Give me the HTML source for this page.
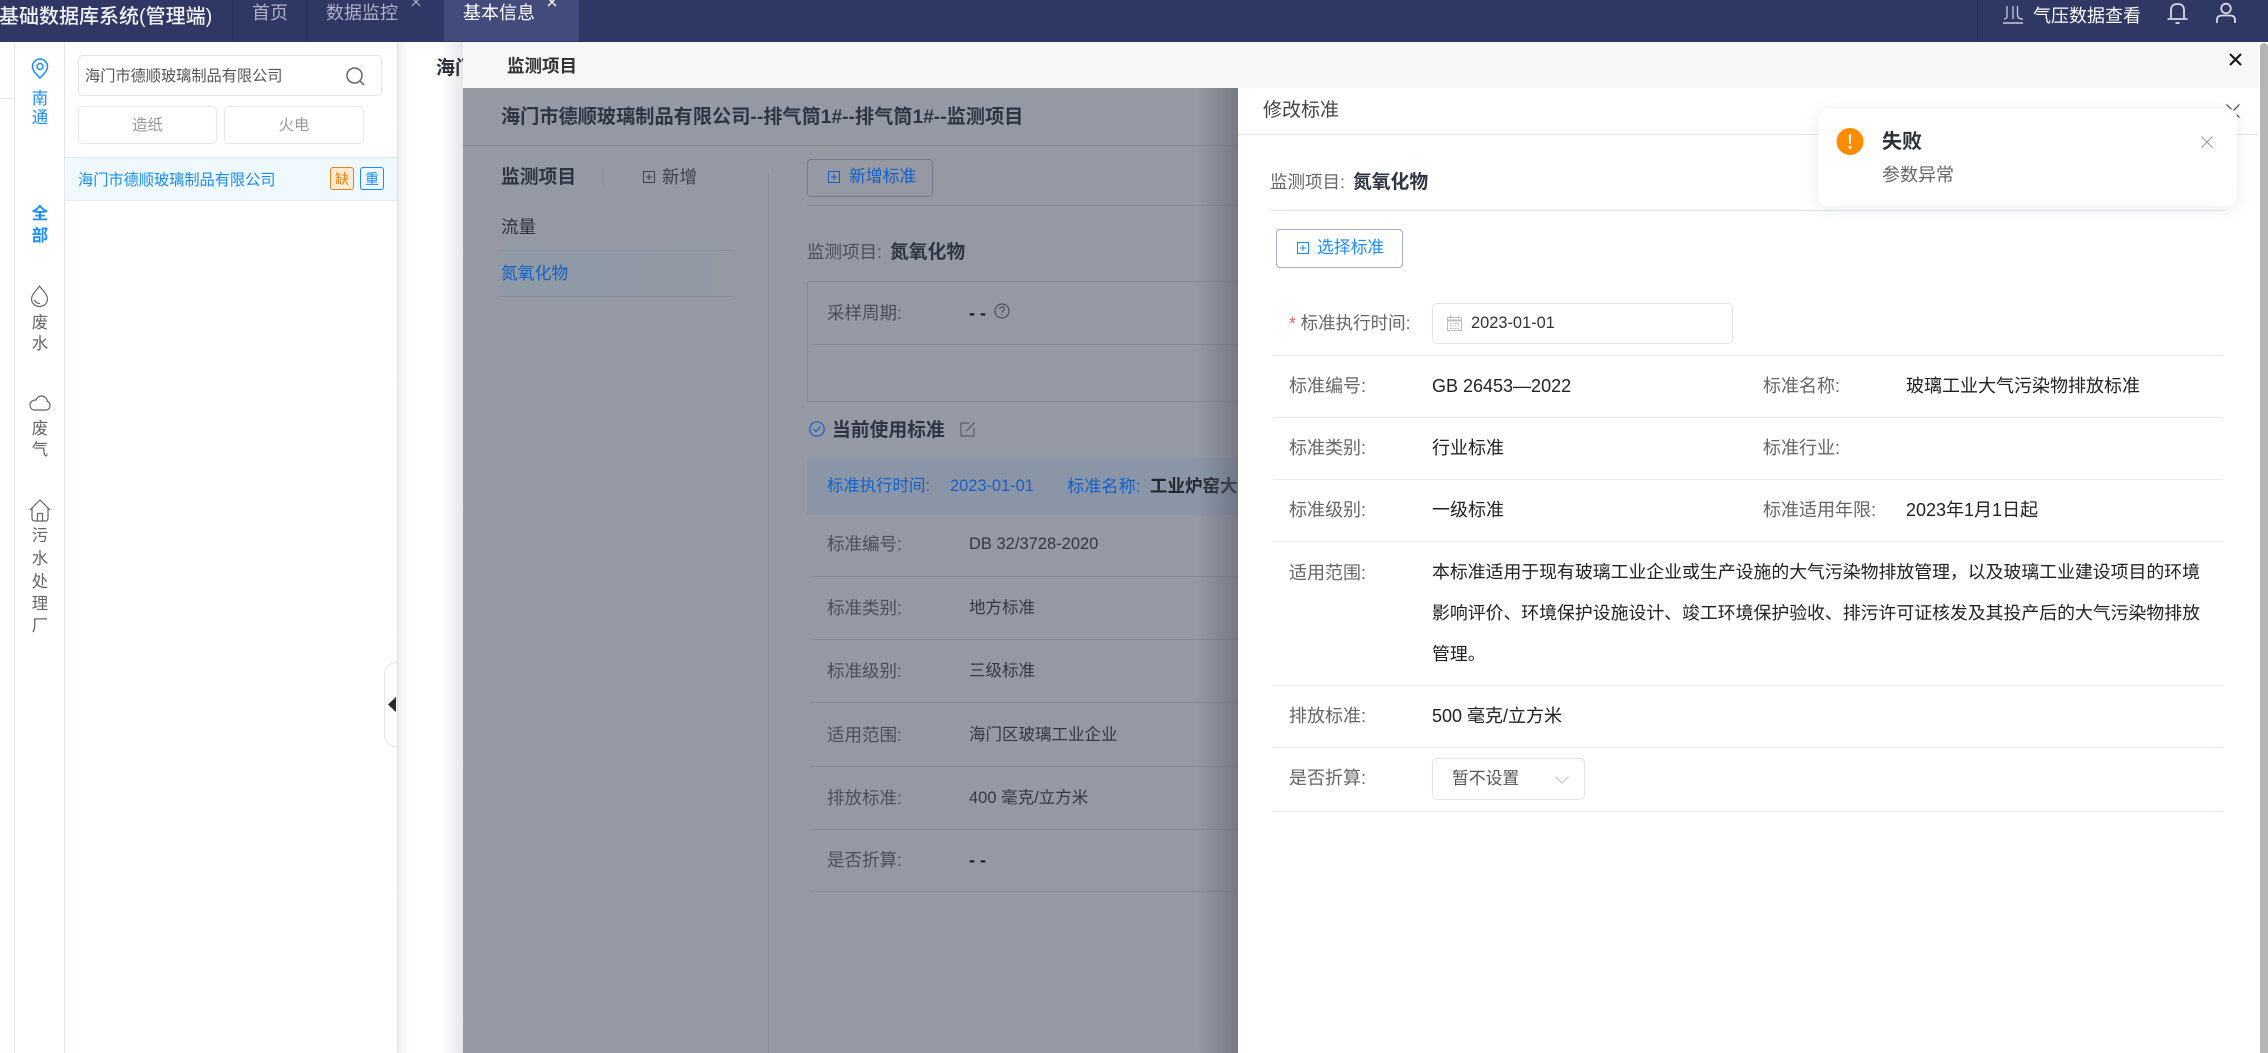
<!DOCTYPE html>
<html lang="zh"><head><meta charset="utf-8"><title>基础数据库系统</title>
<style>
html,body{margin:0;padding:0;width:2268px;height:1053px;overflow:hidden;background:#fff}
body{position:relative;font-family:"Liberation Sans","Noto Sans CJK SC",sans-serif;font-size:18px;color:#333}
div,span.a,svg.a{position:absolute}
.t{position:absolute;white-space:nowrap;line-height:24px;height:24px}
.l{position:absolute;height:1px}
.lab{color:#666;font-size:18px}
.val{color:#222;font-size:18px}
.gl{color:#4a4e57;font-size:17.5px}
.gv{color:#34383f;font-size:16.5px}
.b{font-weight:700}
.nav{position:absolute;left:30px;width:20px;text-align:center;font-size:16.4px;line-height:22px;color:#666;height:22px}
svg{display:block;overflow:visible}
</style></head><body>

<!-- top bar -->
<div style="left:0;top:0;width:2268px;height:42px;background:#2f3765;overflow:hidden">
  <div class="t" style="left:-1px;top:5px;font-size:20px;font-weight:500;color:#f2f3f7">基础数据库系统(管理端)</div>
  <div style="left:232px;top:0;width:1px;height:42px;background:#262d57"></div>
  <div style="left:307px;top:0;width:1px;height:42px;background:#262d57"></div>
  <div class="t" style="left:252px;top:1px;font-size:18px;color:#aeb1c3">首页</div>
  <div class="t" style="left:326px;top:1px;font-size:18px;color:#aeb1c3">数据监控</div>
  <svg class="a" style="left:411px;top:-3px" width="10" height="10"><path d="M1 1L9 9M9 1L1 9" stroke="#aeb1c3" stroke-width="1.2"/></svg>
  <div style="left:444px;top:0;width:135px;height:41px;background:#424b7c"></div>
  <div class="t" style="left:463px;top:1px;font-size:18px;color:#fff">基本信息</div>
  <svg class="a" style="left:547px;top:-3px" width="10" height="10"><path d="M1 1L9 9M9 1L1 9" stroke="#fff" stroke-width="1.5"/></svg>
  <div style="left:1977px;top:0;width:1px;height:42px;background:#262d57"></div>
  <svg class="a" style="left:2003px;top:6px" width="21" height="18" fill="none" stroke="#c9ccd9" stroke-width="1.3"><path d="M4 0V10Q4 13 1 13M10 0V13M14.500 0V9Q14.500 13 20 13"/><path d="M0 17H20" stroke-width="1.500"/></svg>
  <div class="t" style="left:2033px;top:4px;font-size:18px;color:#fff">气压数据查看</div>
  <svg class="a" style="left:2167px;top:2px" width="21" height="22" fill="none" stroke="#d8dae3" stroke-width="1.800"><path d="M4 16V8Q4 2 10.500 2Q17 2 17 8V16"/><path d="M0.500 17H20.500"/><path d="M8.500 21H12.500"/></svg>
  <svg class="a" style="left:2216px;top:2px" width="20" height="21" fill="none" stroke="#d8dae3" stroke-width="1.800"><circle cx="10" cy="6.500" r="4.800"/><path d="M1 21V18Q1 13.500 6 13.500H14Q19 13.500 19 18V21"/></svg>
</div>

<!-- far left strip -->
<div style="left:14px;top:42px;width:1px;height:1011px;background:#e3e5ee"></div>
<div style="left:0;top:98px;width:14px;height:1px;background:#e3e5ee"></div>
<div style="left:64px;top:42px;width:1px;height:1011px;background:#e3e5ee"></div>

<!-- nav -->
<svg class="a" style="left:31px;top:58px" width="18" height="21" fill="none" stroke="#1a8cff" stroke-width="1.500"><path d="M9 20C4 15 1.500 12 1.500 8.500A7.500 7.500 0 0 1 16.500 8.500C16.500 12 14 15 9 20Z"/><circle cx="9" cy="8.500" r="3"/></svg>
<div class="nav" style="top:88px;color:#1a8cff">南</div>
<div class="nav" style="top:107px;color:#1a8cff">通</div>
<div class="nav b" style="top:203px;color:#1a8cff">全</div>
<div class="nav b" style="top:225px;color:#1a8cff">部</div>
<svg class="a" style="left:30px;top:285px" width="19" height="22" fill="none" stroke="#666" stroke-width="1.200"><path d="M9.500 1C6 6 1.500 9.500 1.500 14A8 7.500 0 0 0 17.500 14C17.500 9.500 13 6 9.500 1Z"/><path d="M4.500 15Q6 18.500 10 18.500"/></svg>
<div class="nav" style="top:312px">废</div>
<div class="nav" style="top:333px">水</div>
<svg class="a" style="left:29px;top:395px" width="22" height="16" fill="none" stroke="#666" stroke-width="1.200"><path d="M5 15H17C19.500 15 21 13 21 10.500C21 8.500 20 7 18.500 6.500C18 3 15.500 1 12.500 1C10 1 8 2.500 7 5C3.500 5 1 7 1 10C1 13 3 15 5 15Z"/></svg>
<div class="nav" style="top:418px">废</div>
<div class="nav" style="top:439px">气</div>
<svg class="a" style="left:29px;top:499px" width="22" height="23" fill="none" stroke="#666" stroke-width="1.200"><path d="M1 11L11 1L21 11"/><path d="M3 9V19Q3 22 6 22H16Q19 22 19 19V9"/><path d="M8.500 22V14.500H13.500V22"/></svg>
<div class="nav" style="top:525px">污</div>
<div class="nav" style="top:548px">水</div>
<div class="nav" style="top:571px">处</div>
<div class="nav" style="top:593px">理</div>
<div class="nav" style="top:615px">厂</div>

<!-- list panel -->
<div style="left:78px;top:55px;width:302px;height:39px;border:1px solid #e2e3ec;border-radius:5px"></div>
<div class="t" style="left:85px;top:65px;font-size:15.200px;color:#555">海门市德顺玻璃制品有限公司</div>
<svg class="a" style="left:346px;top:67px" width="19" height="19" fill="none" stroke="#666" stroke-width="1.500"><circle cx="8.500" cy="8.500" r="7.500"/><path d="M14 14L18 18"/></svg>
<div style="left:78px;top:106px;width:137px;height:36px;border:1px solid #e6e7ef;border-radius:5px;text-align:center;line-height:38px;font-size:15.400px;color:#999">造纸</div>
<div style="left:224px;top:106px;width:138px;height:36px;border:1px solid #e6e7ef;border-radius:5px;text-align:center;line-height:38px;font-size:15.400px;color:#999">火电</div>
<div style="left:65px;top:157px;width:332px;height:44px;background:#eff9fe;border-top:1px solid #e2e5ec;border-bottom:1px solid #e8ebf2;box-sizing:border-box"></div>
<div class="t" style="left:78px;top:169px;font-size:15.200px;color:#1a8cff">海门市德顺玻璃制品有限公司</div>
<div style="left:330px;top:167px;width:22px;height:21px;border:1px solid #f57f17;border-radius:3px;background:#fdebd3;color:#f57f17;font-size:14px;line-height:22px;text-align:center">缺</div>
<div style="left:360px;top:167px;width:22px;height:21px;border:1px solid #1a8cff;border-radius:3px;background:#f0faff;color:#1a8cff;font-size:14px;line-height:22px;text-align:center">重</div>

<!-- main white / shadow -->
<div style="left:397px;top:42px;width:1px;height:1011px;background:#dfe0e6"></div>
<div style="left:398px;top:42px;width:12px;height:1011px;background:linear-gradient(90deg,#f0f0f3,#fff)"></div>
<div style="left:440px;top:42px;width:23px;height:1011px;background:linear-gradient(90deg,#fff,#e6e7ea)"></div>
<div style="left:384px;top:662px;width:13px;height:85px;border:1px solid #e4e5ee;border-right:none;border-radius:12px 0 0 12px;box-sizing:border-box;background:#fff"></div>
<svg class="a" style="left:388px;top:697px" width="8" height="15"><path d="M8 0V15L0 7.500Z" fill="#2b2b2b"/></svg>
<div class="t b" style="left:436px;top:57px;font-size:19px;color:#2b2f38;width:27px;overflow:hidden">海门市</div>

<!-- drawer 1 header -->
<div style="left:463px;top:42px;width:1795px;height:46px;background:#f7f7f7"></div>
<div class="t b" style="left:507px;top:54px;font-size:17.500px;color:#333">监测项目</div>
<svg class="a" style="left:2229px;top:53px" width="13" height="13"><path d="M1 1L12 12M12 1L1 12" stroke="#111" stroke-width="2"/></svg>

<!-- drawer 1 body (dimmed) -->
<div style="left:463px;top:88px;width:775px;height:965px;background:#9499a3;overflow:hidden">
  <div class="t b" style="left:38px;top:18px;font-size:19.200px;color:#2e3542">海门市德顺玻璃制品有限公司--排气筒1#--排气筒1#--监测项目</div>
  <div class="l" style="left:0;top:57px;width:775px;background:#858b99"></div>
  <div class="t b" style="left:38px;top:77px;font-size:18.800px;color:#2e3542">监测项目</div>
  <div style="left:139px;top:80px;width:1px;height:20px;background:#878d9a"></div>
  <svg class="a" style="left:180px;top:83px" width="12" height="12" fill="none" stroke="#3d424c" stroke-width="1"><path d="M.5 .5H11.500V11.500H.5ZM6 3V9M3 6H9"/></svg>
  <div class="t" style="left:199px;top:77px;font-size:17.500px;color:#3d424c">新增</div>
  <div style="left:305px;top:85px;width:1px;height:880px;background:#888e9b"></div>
  <div class="t" style="left:38px;top:127px;font-size:17.500px;color:#2e3138">流量</div>
  <div class="l" style="left:38px;top:162px;width:230px;background:#858d9f"></div>
  <div style="left:38px;top:163px;width:230px;height:45px;background:linear-gradient(90deg,#8e9aa6,#9199a5 70%,#9499a3)"></div>
  <div class="t" style="left:38px;top:174px;font-size:16.800px;color:#1560c8">氮氧化物</div>
  <div class="l" style="left:38px;top:208px;width:230px;background:#858d9f"></div>
  <div style="left:344px;top:71px;width:124px;height:36px;border:1px solid #727a90;border-radius:4px"></div>
  <svg class="a" style="left:365px;top:83px" width="12" height="12" fill="none" stroke="#1560c8" stroke-width="1"><path d="M.5 .5H11.500V11.500H.5ZM6 3V9M3 6H9"/></svg>
  <div class="t" style="left:386px;top:77px;font-size:16.800px;color:#1560c8">新增标准</div>
  <div class="l" style="left:344px;top:117px;width:431px;background:#858b99"></div>
  <div class="t" style="left:344px;top:152px;font-size:17.500px;color:#4a4e57">监测项目:</div>
  <div class="t b" style="left:427px;top:152px;font-size:18.800px;color:#2e3542">氮氧化物</div>
  <div style="left:344px;top:193px;width:440px;height:119px;border:1px solid #858b99"></div>
  <div class="t gl" style="left:364px;top:213px">采样周期:</div>
  <div class="t b" style="left:506px;top:213px;font-size:18px;color:#1c1f25">- -</div>
  <svg class="a" style="left:531px;top:215px" width="16" height="16" fill="none" stroke="#3d424c" stroke-width="1"><circle cx="8" cy="8" r="7"/><path d="M5.800 6.200Q6 4 8 4Q10.300 4 10.300 6C10.300 7.800 8 7.800 8 9.800M8 11.200V12.500"/></svg>
  <div class="l" style="left:349px;top:256px;width:426px;background:#858b99"></div>
  <svg class="a" style="left:346px;top:333px" width="16" height="16" fill="none" stroke="#1560c8" stroke-width="1.200"><circle cx="8" cy="8" r="7.200"/><path d="M4.500 8L7 10.500L11.500 5.500"/></svg>
  <div class="t b" style="left:369px;top:330px;font-size:18.800px;color:#2e3542">当前使用标准</div>
  <svg class="a" style="left:497px;top:333px" width="16" height="16" fill="none" stroke="#4a4e57" stroke-width="1"><path d="M9 2H1V15H14V7"/><path d="M6.500 10L14.500 1.500"/></svg>
  <div style="left:344px;top:370px;width:431px;height:57px;background:#8a96a8"></div>
  <div class="t" style="left:364px;top:386px;font-size:16.400px;color:#1560c8">标准执行时间:</div>
  <div class="t" style="left:487px;top:386px;font-size:16.400px;color:#1560c8">2023-01-01</div>
  <div class="t" style="left:604px;top:386px;font-size:17.200px;color:#1560c8">标准名称:</div>
  <div class="t b" style="left:687px;top:386px;font-size:17.500px;color:#24272e">工业炉窑大气污染物排放标准</div>
  <div class="t gl" style="left:364px;top:444px">标准编号:</div><div class="t gv" style="left:506px;top:444px">DB 32/3728-2020</div>
  <div class="l" style="left:348px;top:488px;width:427px;background:#858b99"></div>
  <div class="t gl" style="left:364px;top:508px">标准类别:</div><div class="t gv" style="left:506px;top:508px">地方标准</div>
  <div class="l" style="left:348px;top:551px;width:427px;background:#858b99"></div>
  <div class="t gl" style="left:364px;top:571px">标准级别:</div><div class="t gv" style="left:506px;top:571px">三级标准</div>
  <div class="l" style="left:348px;top:614px;width:427px;background:#858b99"></div>
  <div class="t gl" style="left:364px;top:635px">适用范围:</div><div class="t gv" style="left:506px;top:635px">海门区玻璃工业企业</div>
  <div class="l" style="left:348px;top:678px;width:427px;background:#858b99"></div>
  <div class="t gl" style="left:364px;top:698px">排放标准:</div><div class="t gv" style="left:506px;top:698px">400 毫克/立方米</div>
  <div class="l" style="left:348px;top:741px;width:427px;background:#858b99"></div>
  <div class="t gl" style="left:364px;top:760px">是否折算:</div><div class="t b" style="left:506px;top:760px;font-size:18px;color:#1c1f25">- -</div>
  <div class="l" style="left:348px;top:803px;width:427px;background:#858b99"></div>
  <div style="left:735px;top:0;width:40px;height:965px;background:linear-gradient(90deg,rgba(90,94,105,0),rgba(90,94,105,.55))"></div>
</div>

<!-- drawer 2 -->
<div style="left:1238px;top:88px;width:1020px;height:965px;background:#fff"></div>
<div class="t" style="left:1263px;top:99px;font-size:19px;color:#444">修改标准</div>
<div class="l" style="left:1238px;top:134px;width:1020px;background:#dfe3ef"></div>
<svg class="a" style="left:2226px;top:104px" width="14" height="14"><path d="M.5 .5L13.500 13.500M13.500 .5L.5 13.500" stroke="#39434f" stroke-width="1.200"/></svg>
<div class="t" style="left:1270px;top:170px;font-size:17.500px;color:#666">监测项目:</div>
<div class="t b" style="left:1353px;top:170px;font-size:18.800px;color:#2e3542">氮氧化物</div>
<div class="l" style="left:1270px;top:210px;width:956px;background:#dfe3ef"></div>
<div style="left:1276px;top:229px;width:125px;height:37px;border:1px solid #a8afc4;border-radius:4px"></div>
<svg class="a" style="left:1297px;top:242px" width="12" height="12" fill="none" stroke="#1a8cff" stroke-width="1"><path d="M.5 .5H11.500V11.500H.5ZM6 3V9M3 6H9"/></svg>
<div class="t" style="left:1317px;top:236px;font-size:16.800px;color:#1a8cff">选择标准</div>
<div class="t" style="left:1289px;top:311px;font-size:17.500px;color:#666"><span style="color:#ff5c5c">*</span> 标准执行时间:</div>
<div style="left:1432px;top:303px;width:299px;height:39px;border:1px solid #e2e3ec;border-radius:5px"></div>
<svg class="a" style="left:1447px;top:315px" width="15" height="16" fill="none" stroke="#b6bfcc" stroke-width="1"><path d="M.5 2.500H14.500V15.500H.5ZM3.500 .5V3M11.500 .5V3"/><path d="M.5 5.500H14.500" stroke-width="2"/><path d="M3 8.500H12M3 11H12M3 13.500H12" stroke-dasharray="1.500 1"/></svg>
<div class="t" style="left:1471px;top:311px;font-size:16.400px;color:#333">2023-01-01</div>
<div class="l" style="left:1274px;top:355px;width:948px;background:#e8eaf0"></div>
<div class="t lab" style="left:1289px;top:374px">标准编号:</div><div class="t val" style="left:1432px;top:374px;font-size:18px">GB 26453—2022</div>
<div class="t lab" style="left:1763px;top:374px">标准名称:</div><div class="t val" style="left:1906px;top:374px">玻璃工业大气污染物排放标准</div>
<div class="l" style="left:1274px;top:417px;width:948px;background:#e8eaf0"></div>
<div class="t lab" style="left:1289px;top:436px">标准类别:</div><div class="t val" style="left:1432px;top:436px">行业标准</div>
<div class="t lab" style="left:1763px;top:436px">标准行业:</div>
<div class="l" style="left:1274px;top:479px;width:948px;background:#e8eaf0"></div>
<div class="t lab" style="left:1289px;top:498px">标准级别:</div><div class="t val" style="left:1432px;top:498px">一级标准</div>
<div class="t lab" style="left:1763px;top:498px">标准适用年限:</div><div class="t val" style="left:1906px;top:498px">2023年1月1日起</div>
<div class="l" style="left:1274px;top:541px;width:948px;background:#e8eaf0"></div>
<div class="t lab" style="left:1289px;top:561px">适用范围:</div>
<div class="val" style="left:1432px;top:552px;width:790px;white-space:nowrap;font-size:17.870px;line-height:41px">本标准适用于现有玻璃工业企业或生产设施的大气污染物排放管理，以及玻璃工业建设项目的环境<br>影响评价、环境保护设施设计、竣工环境保护验收、排污许可证核发及其投产后的大气污染物排放<br>管理。</div>
<div class="l" style="left:1274px;top:685px;width:948px;background:#e8eaf0"></div>
<div class="t lab" style="left:1289px;top:704px">排放标准:</div><div class="t val" style="left:1432px;top:704px">500 毫克/立方米</div>
<div class="l" style="left:1274px;top:747px;width:948px;background:#e8eaf0"></div>
<div class="t lab" style="left:1289px;top:766px">是否折算:</div>
<div style="left:1432px;top:758px;width:151px;height:40px;border:1px solid #e2e3ec;border-radius:5px"></div>
<div class="t" style="left:1452px;top:767px;font-size:16.800px;color:#555">暂不设置</div>
<svg class="a" style="left:1555px;top:776px" width="14" height="8" fill="none" stroke="#bfc4d0" stroke-width="1.200"><path d="M.5 .5L7 7L13.500 .5"/></svg>
<div class="l" style="left:1274px;top:811px;width:948px;background:#e8eaf0"></div>

<!-- scrollbar -->
<div style="left:2260px;top:43px;width:8px;height:1010px;background:#b5b5b5;border-radius:4px 4px 0 0"></div>

<!-- toast -->
<div style="left:1818px;top:109px;width:419px;height:97px;background:#fff;border-radius:8px;box-shadow:0 3px 16px rgba(100,110,140,.14)"></div>
<svg class="a" style="left:1836px;top:128px" width="28" height="27"><circle cx="14" cy="13.500" r="13.500" fill="#ff8c00"/><path d="M12.800 6.500H15.200L14.800 16H13.200Z" fill="#fff"/><circle cx="14" cy="19.300" r="1.500" fill="#fff"/></svg>
<div class="t b" style="left:1882px;top:130px;font-size:20px;color:#2b2f38">失败</div>
<div class="t" style="left:1882px;top:163px;font-size:18px;color:#666">参数异常</div>
<svg class="a" style="left:2201px;top:136px" width="12" height="12"><path d="M.5 .5L11.500 11.500M11.500 .5L.5 11.500" stroke="#95a0ad" stroke-width="1.200"/></svg>

</body></html>
